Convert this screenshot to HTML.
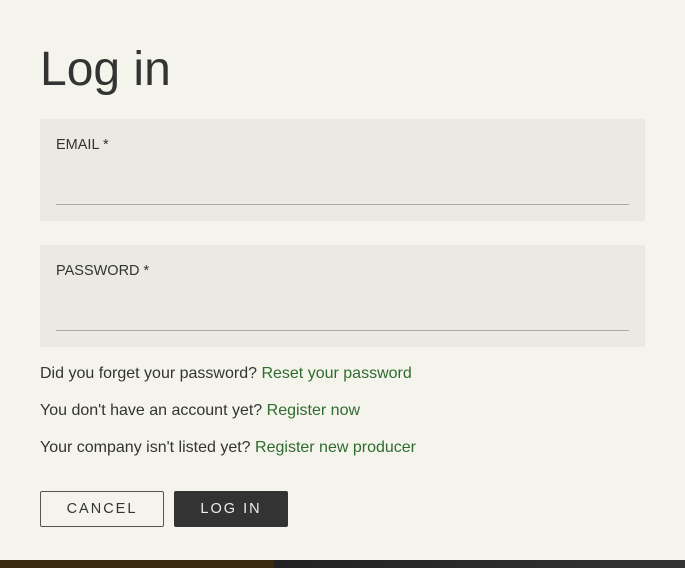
<!DOCTYPE html>
<html><head><style>
body{margin:0;width:685px;height:568px;background:#f5f4ec;font-family:"Liberation Sans",sans-serif;position:relative;overflow:hidden;color:#333}
h1{position:absolute;left:40px;top:44px;margin:0;font-weight:normal;font-size:48px;color:#333;line-height:52px}
.f{position:absolute;left:40px;width:605px;height:102px;background:#ebeae2}
.f span{position:absolute;left:16px;top:18px;font-size:14.5px;color:#333}
.f i{position:absolute;left:16px;right:16px;top:85px;height:1px;background:#aaa}
p{position:absolute;left:40px;margin:0;font-size:16px;color:#333}
p a{color:#2e6b2e;text-decoration:none}
.b{position:absolute;top:491px;height:36px;box-sizing:border-box;border-radius:2px;font-size:14.5px;letter-spacing:2px;text-align:center;line-height:34px}
.bot{position:absolute;left:0;top:560px;width:685px;height:8px;background:linear-gradient(90deg,#3a2a10 0,#3a2a10 40%,#222 40%,#333 100%)}
</style></head><body>
<h1>Log in</h1>
<div class="f" style="top:119px"><span>EMAIL *</span><i></i></div>
<div class="f" style="top:245px"><span>PASSWORD *</span><i></i></div>
<p style="top:365px">Did you forget your password? <a>Reset your password</a></p>
<p style="top:402px">You don't have an account yet? <a>Register now</a></p>
<p style="top:439px">Your company isn't listed yet? <a>Register new producer</a></p>
<div class="b" style="left:40px;width:124px;border:1px solid #555;color:#333">CANCEL</div>
<div class="b" style="left:174px;width:114px;background:#333;border:1px solid #333;color:#eee">LOG IN</div>
<div class="bot"></div>
</body></html>
